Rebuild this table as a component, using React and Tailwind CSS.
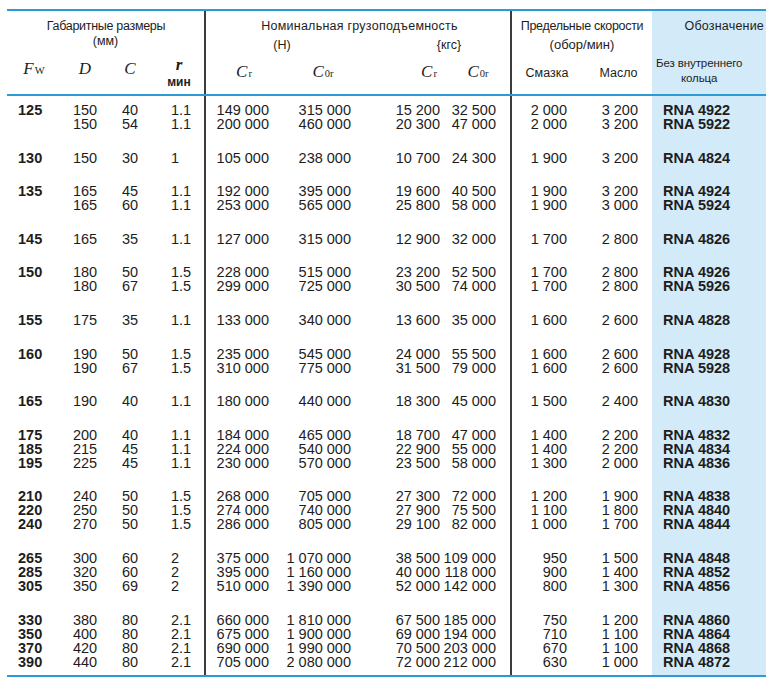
import React from "react";

const groups = [
  [
    ["125", "150", "40", "1.1", "149 000", "315 000", "15 200", "32 500", "2 000", "3 200", "RNA 4922"],
    ["", "150", "54", "1.1", "200 000", "460 000", "20 300", "47 000", "2 000", "3 200", "RNA 5922"],
  ],
  [["130", "150", "30", "1", "105 000", "238 000", "10 700", "24 300", "1 900", "3 200", "RNA 4824"]],
  [
    ["135", "165", "45", "1.1", "192 000", "395 000", "19 600", "40 500", "1 900", "3 200", "RNA 4924"],
    ["", "165", "60", "1.1", "253 000", "565 000", "25 800", "58 000", "1 900", "3 000", "RNA 5924"],
  ],
  [["145", "165", "35", "1.1", "127 000", "315 000", "12 900", "32 000", "1 700", "2 800", "RNA 4826"]],
  [
    ["150", "180", "50", "1.5", "228 000", "515 000", "23 200", "52 500", "1 700", "2 800", "RNA 4926"],
    ["", "180", "67", "1.5", "299 000", "725 000", "30 500", "74 000", "1 700", "2 800", "RNA 5926"],
  ],
  [["155", "175", "35", "1.1", "133 000", "340 000", "13 600", "35 000", "1 600", "2 600", "RNA 4828"]],
  [
    ["160", "190", "50", "1.5", "235 000", "545 000", "24 000", "55 500", "1 600", "2 600", "RNA 4928"],
    ["", "190", "67", "1.5", "310 000", "775 000", "31 500", "79 000", "1 600", "2 600", "RNA 5928"],
  ],
  [["165", "190", "40", "1.1", "180 000", "440 000", "18 300", "45 000", "1 500", "2 400", "RNA 4830"]],
  [
    ["175", "200", "40", "1.1", "184 000", "465 000", "18 700", "47 000", "1 400", "2 200", "RNA 4832"],
    ["185", "215", "45", "1.1", "224 000", "540 000", "22 900", "55 000", "1 400", "2 200", "RNA 4834"],
    ["195", "225", "45", "1.1", "230 000", "570 000", "23 500", "58 000", "1 300", "2 000", "RNA 4836"],
  ],
  [
    ["210", "240", "50", "1.5", "268 000", "705 000", "27 300", "72 000", "1 200", "1 900", "RNA 4838"],
    ["220", "250", "50", "1.5", "274 000", "740 000", "27 900", "75 500", "1 100", "1 800", "RNA 4840"],
    ["240", "270", "50", "1.5", "286 000", "805 000", "29 100", "82 000", "1 000", "1 700", "RNA 4844"],
  ],
  [
    ["265", "300", "60", "2", "375 000", "1 070 000", "38 500", "109 000", "950", "1 500", "RNA 4848"],
    ["285", "320", "60", "2", "395 000", "1 160 000", "40 000", "118 000", "900", "1 400", "RNA 4852"],
    ["305", "350", "69", "2", "510 000", "1 390 000", "52 000", "142 000", "800", "1 300", "RNA 4856"],
  ],
  [
    ["330", "380", "80", "2.1", "660 000", "1 810 000", "67 500", "185 000", "750", "1 200", "RNA 4860"],
    ["350", "400", "80", "2.1", "675 000", "1 900 000", "69 000", "194 000", "710", "1 100", "RNA 4864"],
    ["370", "420", "80", "2.1", "690 000", "1 990 000", "70 500", "203 000", "670", "1 100", "RNA 4868"],
    ["390", "440", "80", "2.1", "705 000", "2 080 000", "72 000", "212 000", "630", "1 000", "RNA 4872"],
  ],
];

const sans = "font-['Liberation_Sans',Arial,sans-serif]";
const narrow = "font-['Liberation_Sans_Narrow','Arial_Narrow','Liberation_Sans',sans-serif]";
const serif = "font-['Liberation_Serif','Times_New_Roman',serif]";

function Sym({ main, sub, bold }) {
  return (
    <span className={`${serif} italic text-[17px] leading-[18px] ${bold ? "font-bold" : ""}`}>
      {main}
      {sub && <span className="not-italic text-[10.5px] ml-[1px]">{sub}</span>}
    </span>
  );
}

function Header() {
  return (
    <div className="flex h-[85px] border-b-2 border-[#2b9ad5] text-[#1d1d1d]">
      {/* section 1 */}
      <div className="w-[197px] flex flex-col items-center pt-[8px]">
        <div className={`${narrow} text-[12.5px] leading-[14px] tracking-[-0.3px] pl-[1px]`}>Габаритные размеры</div>
        <div className={`${narrow} text-[12.5px] leading-[14px] mt-[1px]`}>(мм)</div>
        <div className="flex w-full mt-[8px]">
          <div className="w-[53px] text-center pl-[1px]">
            <Sym main="F" sub="W" />
          </div>
          <div className="w-[50px] text-center">
            <Sym main="D" />
          </div>
          <div className="w-[40px] text-center">
            <Sym main="C" />
          </div>
          <div className="w-[54px] flex flex-col items-center pl-[4px]">
            <Sym main="r" bold />
            <span className={`${narrow} font-bold text-[12px] leading-[12px] mt-[2px]`}>мин</span>
          </div>
        </div>
      </div>
      {/* section 2 */}
      <div className="w-[308px] border-x-2 border-[#3c3c3c] flex flex-col pt-[8px]">
        <div className={`${narrow} text-[12.5px] leading-[14px] tracking-[0.25px] text-center pl-[3px]`}>
          Номинальная грузоподъемность
        </div>
        <div className={`flex ${narrow} text-[12.5px] leading-[14px] mt-[5px]`}>
          <div className="w-[152px] text-center">(Н)</div>
          <div className="w-[69px]" />
          <div className="w-[44px] text-center">{"{кгс}"}</div>
        </div>
        <div className="flex mt-[7px]">
          <div className="w-[76px] text-center">
            <Sym main="C" sub="r" />
          </div>
          <div className="w-[82px] text-center">
            <Sym main="C" sub="0r" />
          </div>
          <div className="w-[44px]" />
          <div className="w-[42px] text-center">
            <Sym main="C" sub="r" />
          </div>
          <div className="w-[56px] text-center">
            <Sym main="C" sub="0r" />
          </div>
        </div>
      </div>
      {/* section 3 */}
      <div className="w-[140px] flex flex-col items-center pt-[8px]">
        <div className={`${narrow} text-[12.5px] leading-[14px] tracking-[-0.3px]`}>Предельные скорости</div>
        <div className={`${narrow} text-[13px] leading-[14px] mt-[5px]`}>(обор/мин)</div>
        <div className={`flex w-full ${narrow} text-[12.5px] leading-[14px] mt-[14px]`}>
          <div className="w-[70px] text-center">Смазка</div>
          <div className="w-[70px] text-center pl-[3px]">Масло</div>
        </div>
      </div>
      {/* section 4 */}
      <div className="w-[114px] bg-[#d3eaf8] flex flex-col pt-[8px]">
        <div className={`${narrow} text-[12.5px] leading-[14px] tracking-[0.2px] text-right pr-[2px]`}>Обозначение</div>
        <div className={`${narrow} text-[11.5px] leading-[15px] tracking-[-0.1px] mt-[23px] pl-[4px]`}>
          <div className="inline-block text-center">
            Без внутреннего
            <br />
            кольца
          </div>
        </div>
      </div>
    </div>
  );
}

function Group({ rows, first, last }) {
  const pad = first ? "pt-[7px]" : "pt-[19.6px]";
  const pb = last ? "pb-[6px]" : "";
  return (
    <div className={`flex text-[14.5px] leading-[14px] text-[#1d1d1d]`}>
      <div className={`w-[197px] ${pad} ${pb} ${sans}`}>
        {rows.map((r, i) => (
          <div key={i} className="flex h-[14px]">
            <div className="w-[53px] pl-[11px] font-bold">{r[0]}</div>
            <div className="w-[50px] text-center">{r[1]}</div>
            <div className="w-[40px] text-center">{r[2]}</div>
            <div className="w-[54px] pl-[21px]">{r[3]}</div>
          </div>
        ))}
      </div>
      <div className={`w-[308px] border-x-2 border-[#3c3c3c] ${pad} ${pb}`}>
        {rows.map((r, i) => (
          <div key={i} className="flex h-[14px]">
            <div className={`w-[63px] text-right ${sans}`}>{r[4]}</div>
            <div className={`w-[82px] text-right ${sans}`}>{r[5]}</div>
            <div className={`w-[89px] text-right ${narrow}`}>{r[6]}</div>
            <div className={`w-[56px] text-right ${narrow}`}>{r[7]}</div>
          </div>
        ))}
      </div>
      <div className={`w-[140px] ${pad} ${pb} ${sans}`}>
        {rows.map((r, i) => (
          <div key={i} className="flex h-[14px]">
            <div className="w-[55px] text-right">{r[8]}</div>
            <div className="w-[71px] text-right">{r[9]}</div>
          </div>
        ))}
      </div>
      <div className={`w-[114px] bg-[#d3eaf8] ${pad} ${pb} ${sans}`}>
        {rows.map((r, i) => (
          <div key={i} className="h-[14px] pl-[11px] font-bold">
            {r[10]}
          </div>
        ))}
      </div>
    </div>
  );
}

export default function App() {
  return (
    <div className="w-[766px] h-[680px] bg-white pt-[9px] pl-[7px] overflow-hidden">
      <div className="w-[759px] border-t-2 border-b-2 border-[#2b9ad5]">
        <Header />
        {groups.map((g, i) => (
          <Group key={i} rows={g} first={i === 0} last={i === groups.length - 1} />
        ))}
      </div>
    </div>
  );
}
